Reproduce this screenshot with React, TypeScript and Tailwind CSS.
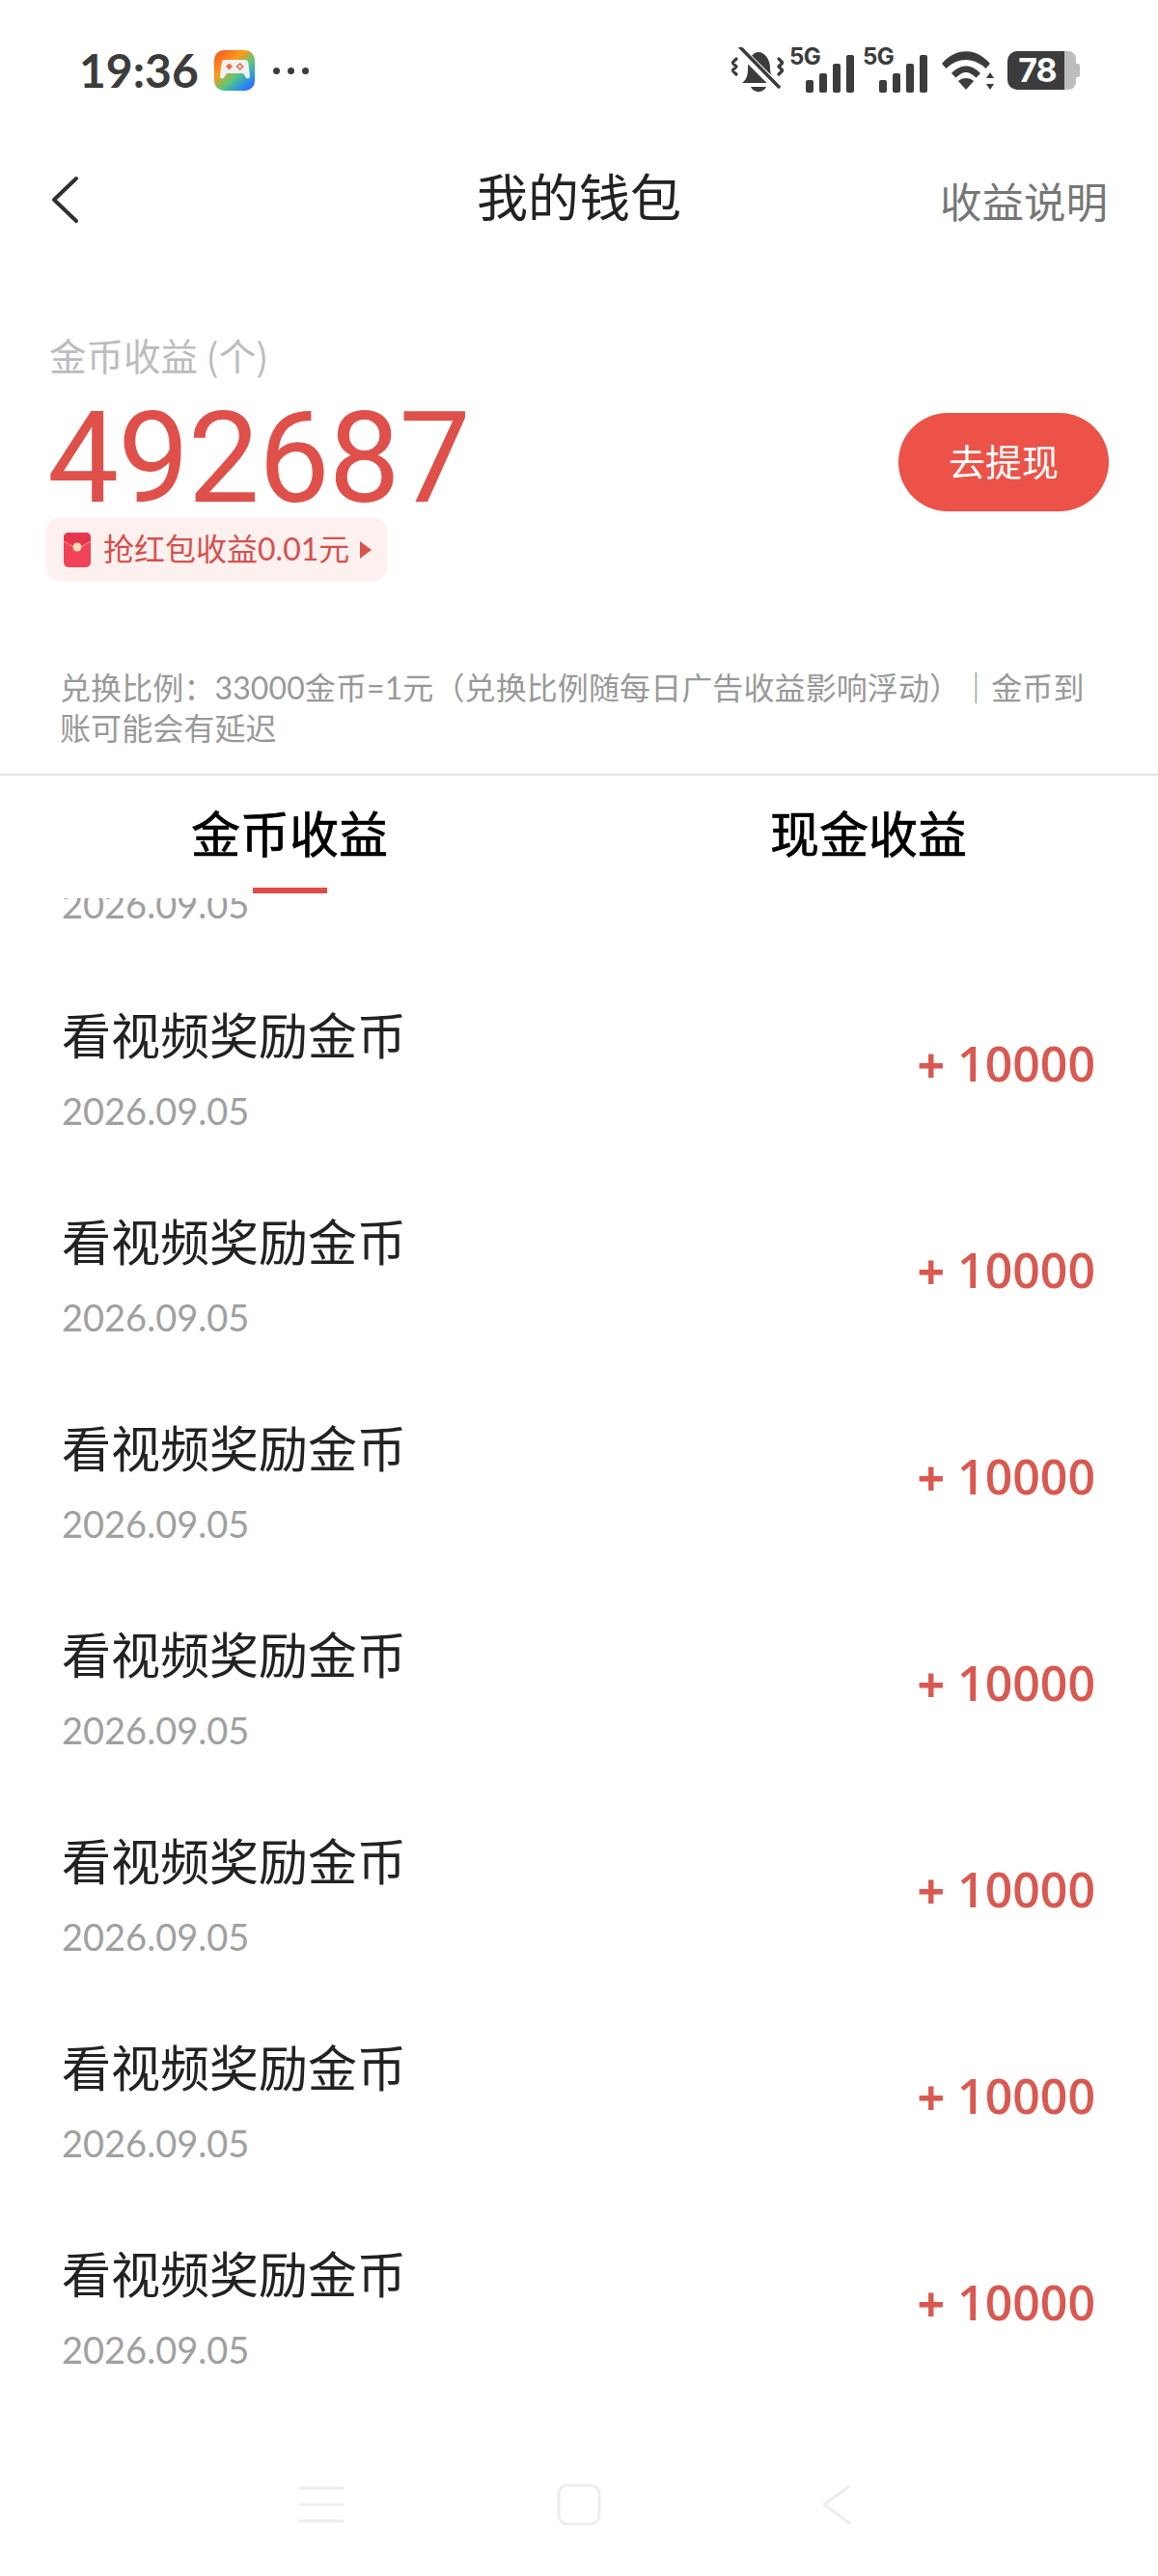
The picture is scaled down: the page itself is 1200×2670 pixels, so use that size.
const cjk = "font-['Noto_Sans_CJK_SC',sans-serif]";

const GameIcon = () => (
  <svg width="42" height="42" viewBox="0 0 42 42">
    <defs>
      <linearGradient id="gameBg" x1="0" y1="0" x2="0.9" y2="1">
        <stop offset="0" stopColor="#fb4f23" />
        <stop offset="0.38" stopColor="#fb9a1a" />
        <stop offset="0.62" stopColor="#58c87c" />
        <stop offset="0.85" stopColor="#2a8df0" />
        <stop offset="1" stopColor="#3a62f5" />
      </linearGradient>
    </defs>
    <rect width="42" height="42" rx="10" fill="url(#gameBg)" />
    <path d="M10 10h22c2 0 3 1 3.300 3l1.700 14c.3 2.500-2.500 3.500-4 1.500l-3-4.500h-17l-3 4.500c-1.500 2-4.300 1-4-1.500l1.700-14c.3-2 1.300-3 3.300-3z" fill="#eef2f8" />
    <path d="M12.500 17h6M15.500 14v6" stroke="#f0662b" strokeWidth="2.400" />
    <rect x="24.500" y="14.800" width="4.400" height="4.400" transform="rotate(45 26.700 17)" fill="none" stroke="#f0662b" strokeWidth="1.400" />
  </svg>
);

const BellOff = () => (
  <svg width="54" height="48" viewBox="0 0 54 48" fill="#3c3c3c">
    <path d="M11 37c4-3 6-7 6-15 0-10 5-17 11-17s12 7 12 16c0 5 1 8 3 11l-6 5z" />
    <path d="M20 41h16c-1 3-5 5-8 5s-7-2-8-5z" />
    <path d="M7 1 L46 40" stroke="#ffffff" strokeWidth="9" />
    <path d="M9 0 L49 41" stroke="#3c3c3c" strokeWidth="3.500" strokeLinecap="round" />
    <path d="M5 12l-4 4 4 4-4 4 4 4M49 12l4 4-4 4 4 4-4 4" fill="none" stroke="#3c3c3c" strokeWidth="3.200" strokeLinecap="round" strokeLinejoin="round" />
  </svg>
);

const Signal = () => (
  <div className="relative w-[68px] h-[46px]">
    <span className="absolute left-0 top-[-4px] text-[24px] leading-[26px] font-bold text-[#3c3c3c] font-['Inter',sans-serif] tracking-[-0.5px]">
      5G
    </span>
    <svg className="absolute left-0 top-0" width="68" height="46" viewBox="0 0 68 46" fill="#3c3c3c">
      <rect x="17" y="33" width="8" height="13" rx="2" />
      <rect x="31" y="26" width="8" height="20" rx="2" />
      <rect x="45" y="16" width="8" height="30" rx="2" />
      <rect x="59" y="7" width="8" height="39" rx="2" />
    </svg>
  </div>
);

const Wifi = () => (
  <svg width="54" height="40" viewBox="0 0 54 40" fill="#3c3c3c">
    <path d="M0 13 C14 -4 36 -4 50 13 L45.500 18 C33 6 17 6 4.500 18z" />
    <path d="M10 23 C19 13 31 13 40 23 L35.500 27.500 C28 20 22 20 14.500 27.500z" />
    <path d="M17 31 C21 27 29 27 33 31 L25 40z" />
    <path d="M50 22l4 6h-8zM50 40l4-6h-8z" />
  </svg>
);

const Battery = () => (
  <div className="flex items-center h-[40px] w-[75px]">
    <div className="w-[59px] h-[40px] bg-[#3c3c3c] rounded-l-[10px] flex items-center justify-center">
      <span className="text-[34px] leading-[40px] font-bold text-white font-['Inter',sans-serif] tracking-[-1px] pl-[3px]">
        78
      </span>
    </div>
    <div className="w-[12px] h-[40px] bg-[#bdbdbd] rounded-r-[8px]" />
    <div className="w-[4px] h-[14px] bg-[#bdbdbd] rounded-r-[2px]" />
  </div>
);

const BackIcon = () => (
  <svg width="30" height="50" viewBox="0 0 30 50" fill="none" stroke="#2f2f2f" strokeWidth="4" strokeLinecap="round" strokeLinejoin="round">
    <path d="M27 3 L4 25 L27 47" />
  </svg>
);

const RedPacket = () => (
  <svg width="28" height="36" viewBox="0 0 28 36">
    <rect width="28" height="36" rx="5" fill="#f0435a" />
    <path d="M0 9 L14 17 L28 9 V5 a5 5 0 0 0 -5 -5 H5 a5 5 0 0 0 -5 5z" fill="#e8354e" />
    <path d="M0 9 L14 17 L28 9" fill="none" stroke="#f7b2a0" strokeWidth="0.800" />
    <circle cx="14" cy="15" r="4.500" fill="#f4dcb5" />
  </svg>
);

const Row = () => (
  <div className="h-[214px] shrink-0 flex justify-between pl-[64px] pr-[65px]">
    <div className="flex flex-col pt-[66px]">
      <div className={`text-[51px] leading-[50px] text-[#222222] ${cjk}`}>看视频奖励金币</div>
      <div className="mt-[32px] text-[38px] leading-[46px] text-[#a0a0a0] font-['Lato',sans-serif]">2026.09.05</div>
    </div>
    <div className="pt-[92px] text-[50px] leading-[60px] font-semibold text-[#d95850] font-['Open_Sans',sans-serif]">
      <span className="font-bold relative top-[2px]">+</span> 10000
    </div>
  </div>
);

export default function App() {
  return (
    <div className="w-[1200px] h-[2670px] flex flex-col bg-white overflow-hidden">
      {/* Status bar */}
      <div className="h-[142px] shrink-0 flex items-center justify-between pl-[82px] pr-[81px] pt-[4px]">
        <div className="flex items-center">
          <span className="text-[48px] leading-[50px] font-bold text-[#3c3c3c] font-['Lato',sans-serif] w-[140px]">19:36</span>
          <GameIcon />
          <div className="flex gap-[8px] ml-[19px]">
            <span className="w-[7px] h-[7px] rounded-full bg-[#3c3c3c]" />
            <span className="w-[7px] h-[7px] rounded-full bg-[#3c3c3c]" />
            <span className="w-[7px] h-[7px] rounded-full bg-[#3c3c3c]" />
          </div>
        </div>
        <div className="flex items-center">
          <BellOff />
          <div className="ml-[6px]"><Signal /></div>
          <div className="ml-[8px]"><Signal /></div>
          <div className="ml-[14px]"><Wifi /></div>
          <div className="ml-[14px]"><Battery /></div>
        </div>
      </div>

      {/* Header */}
      <div className="h-[130px] shrink-0 grid grid-cols-3 items-center pl-[52px] pr-[52px]">
        <BackIcon />
        <h1 className={`justify-self-center text-[53px] leading-[60px] mb-[10px] text-[#222222] font-normal ${cjk}`}>我的钱包</h1>
        <div className={`justify-self-end mt-[2px] text-[43.500px] leading-[60px] text-[#777777] ${cjk}`}>收益说明</div>
      </div>

      {/* Balance */}
      <div className="shrink-0 flex justify-between items-start pl-[48px] pr-[51px] pt-[70px]">
        <div className="flex flex-col items-start">
          <div className={`pl-[3px] text-[38.500px] leading-[50px] text-[#bcbcbc] ${cjk}`}>金币收益 (个)</div>
          <div className="pl-[1px] pt-[21px] text-[132px] leading-[124px] tracking-[-1.300px] text-[#e0504a] font-['Roboto',sans-serif]">492687</div>
          <div className="h-[65px] w-[353px] flex items-center rounded-[14px] bg-[#fdf1f0] pl-[18px]">
            <RedPacket />
            <span className={`ml-[13px] pb-[3px] text-[32px] leading-[40px] text-[#d6504c] ${cjk}`}>抢红包收益<span className="font-['Lato',sans-serif]">0.01</span>元</span>
            <span className="ml-[11px] w-0 h-0 border-y-[9px] border-y-transparent border-l-[12px] border-l-[#d9534f]" />
          </div>
        </div>
        <button className={`mt-[86px] pb-[5px] w-[218px] h-[102px] rounded-full bg-[#ec5247] text-white text-[38px] ${cjk}`}>去提现</button>
      </div>

      {/* Exchange note */}
      <p className={`shrink-0 mt-[89px] ml-[62px] w-[1082px] text-[32px] leading-[41px] tracking-[0.1px] text-[#999999] ${cjk}`}>
        兑换比例：<span className="font-['Lato',sans-serif]">33000</span>金币<span className="font-['Lato',sans-serif]">=1</span>元（兑换比例随每日广告收益影响浮动）｜金币到账可能会有延迟
      </p>

      <div className="shrink-0 mt-[28px] h-[2px] bg-[#e5e5e5]" />

      {/* Tabs */}
      <div className="shrink-0 h-[127px] grid grid-cols-2">
        <div className="flex flex-col items-center">
          <div className={`mt-[33px] text-[51px] leading-[50px] text-black [-webkit-text-stroke:0.7px_black] ${cjk}`}>金币收益</div>
          <div className="mt-[33px] w-[77px] h-[6px] bg-[#dc4c44]" />
        </div>
        <div className="flex flex-col items-center">
          <div className={`mt-[33px] text-[51px] leading-[50px] text-black [-webkit-text-stroke:0.7px_black] ${cjk}`}>现金收益</div>
        </div>
      </div>

      {/* List, first row scrolled partly out of view */}
      <div className="flex-1 min-h-0 overflow-hidden flex flex-col">
        <div className="-mt-[165px] flex flex-col">
          {Array.from({ length: 8 }).map((_, i) => (
            <Row key={i} />
          ))}
        </div>
      </div>

      {/* System nav */}
      <div className="h-[148px] shrink-0 grid grid-cols-3 px-[200px] items-center justify-items-center">
        <svg width="48" height="40" viewBox="0 0 48 40" stroke="#ededed" strokeWidth="3" strokeLinecap="round">
          <path d="M2 3h44M2 20h44M2 37h44" />
        </svg>
        <svg width="48" height="44" viewBox="0 0 48 44" fill="none" stroke="#ededed" strokeWidth="3">
          <rect x="3" y="2" width="42" height="40" rx="9" />
        </svg>
        <svg width="32" height="44" viewBox="0 0 32 44" fill="none" stroke="#ededed" strokeWidth="3" strokeLinecap="round" strokeLinejoin="round">
          <path d="M29 3 L3 22 L29 41" />
        </svg>
      </div>
    </div>
  );
}
